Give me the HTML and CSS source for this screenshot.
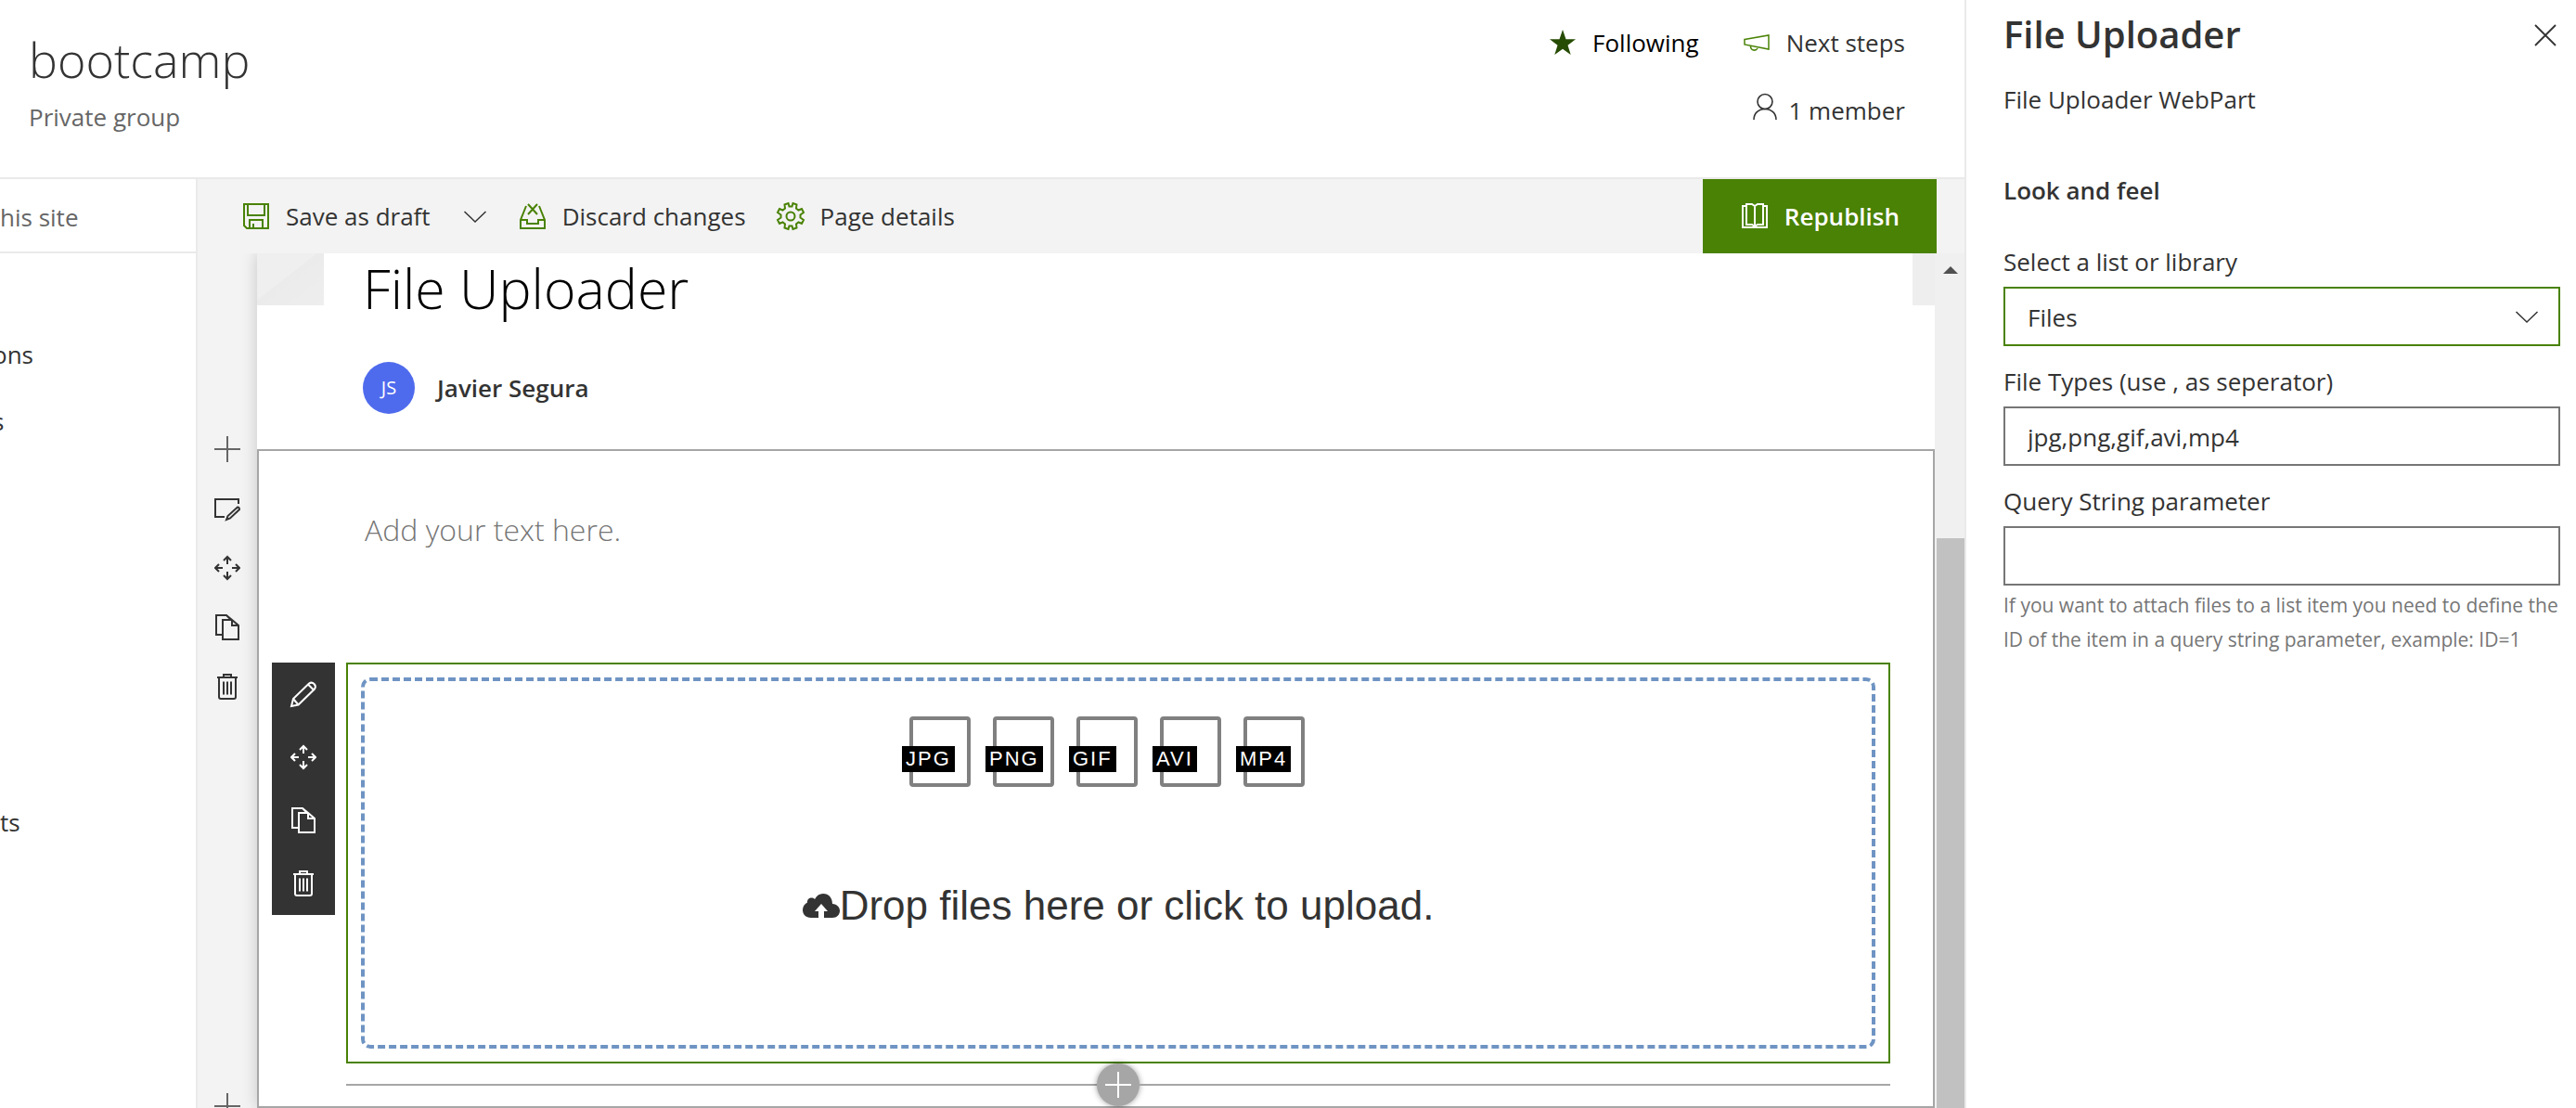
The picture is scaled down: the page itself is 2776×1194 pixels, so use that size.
FILE: index.html
```html
<!DOCTYPE html>
<html lang="en">
<head>
<meta charset="utf-8">
<title>bootcamp - File Uploader</title>
<link rel="stylesheet" href="styles.css">
</head>
<body>
<svg class="sprite" aria-hidden="true">
  <symbol id="move" viewBox="0 0 28 28"><path d="M14 2v8M10 6l4-4 4 4M14 26v-8M10 22l4 4 4-4M1 14h8M5 10l-4 4 4 4M27 14h-8M23 10l4 4-4 4"/></symbol>
  <symbol id="copy" viewBox="0 0 28 28"><path d="M9 22H2V1h11l4 4M9 6h10l7 6v15H9zM19 6v6h7M13 1l6 5"/></symbol>
  <symbol id="trash" viewBox="0 0 28 28"><path d="M3 4h22M10 4V1h8v3M5 4v21q0 2 2 2h14q2 0 2-2V4M10 8.500v14M14 8.500v14M18 8.500v14"/></symbol>
  <symbol id="plus" viewBox="0 0 28 28"><path d="M14 0v28M0 14h28"/></symbol>
  <symbol id="chevron" viewBox="0 0 28 28"><path stroke-width="1.5" d="M2.500 9 14 20 25.500 9"/></symbol>
</svg>
<div class="app">
  <div class="site">
    <header class="site-header">
      <div>
        <h1 class="site-name">bootcamp</h1>
        <p class="site-kind">Private group</p>
      </div>
      <div class="site-actions">
        <div class="action-row">
          <button class="cmd following" type="button">
            <svg class="icon" viewBox="0 0 28 28"><path fill="#264b03" stroke="none" d="M14 0l3.500 10.300H28l-8.500 6.500L22.700 27 14 20.800 5.300 27l3.200-10.200L0 10.300h10.500z"/></svg>
            <span>Following</span>
          </button>
          <button class="cmd" type="button">
            <svg class="icon green" viewBox="0 0 28 28"><path stroke-width="1.5" d="M1 10.500 27 6v15L1 16zM7.500 17.500v1a4 4 0 0 0 7.500 1.500"/></svg>
            <span>Next steps</span>
          </button>
        </div>
        <a class="cmd members" href="#members">
          <svg class="icon" viewBox="0 0 28 28"><g stroke-width="1.600"><circle cx="14" cy="8.500" r="8"/><path d="M2 28c0-7 5-11.500 12-11.500S26 21 26 28"/></g></svg>
          <span>1 member</span>
        </a>
      </div>
    </header>
    <div class="workspace">
      <nav class="side-nav" aria-label="Site">
        <a class="search-link" href="#search">his site</a>
        <ul class="nav-list">
          <li><a href="#1">ons</a></li>
          <li><a href="#2">s</a></li>
          <li class="nav-contents"><a href="#3">ts</a></li>
        </ul>
      </nav>
      <main class="editor">
        <div class="command-bar">
          <button class="cmd" type="button">
            <svg class="icon green" viewBox="0 0 28 28"><path d="M1 1h26v26H4l-3-3zM5 1v12h18V1M7 27v-9h14v9M11 27v-5"/></svg>
            <span>Save as draft</span>
          </button>
          <button class="cmd" type="button" aria-label="More save options"><svg class="icon" viewBox="0 0 28 28"><use href="#chevron"/></svg></button>
          <button class="cmd" type="button">
            <svg class="icon green" viewBox="0 0 28 28"><path d="M7 3 1 18v9h26v-9L21 3M1 18h7v4h12v-4h7M9 1l10 11M19 1 9 12"/></svg>
            <span>Discard changes</span>
          </button>
          <button class="cmd" type="button">
            <svg class="icon green" viewBox="0 0 28 28"><circle cx="14" cy="14" r="4.500"/><path d="M11.500 0l1 3.500h3L16.500 0l4 1.500-.5 4 2.500 2 3.500-1.500 2 4-3.500 2.500v3l3.500 2.500-2 4-3.500-1.500-2.500 2 .5 4-4 1.500-1-3.500h-3l-1 3.500-4-1.500.5-4-2.500-2L2 22l-2-4 3.500-2.500v-3L0 10l2-4 3.500 1.500 2.500-2-.5-4z"/></svg>
            <span>Page details</span>
          </button>
          <button class="cmd republish" type="button">
            <svg class="icon" viewBox="0 0 28 28"><path d="M5 3H1v23h26V3h-4M5 1h6l3 2 3-2h6v22h-6l-3 2-3-2H5zM14 3v22"/></svg>
            <span>Republish</span>
          </button>
        </div>
        <div class="canvas">
          <div class="section-rail">
            <button type="button" aria-label="Add section"><svg class="icon faint" viewBox="0 0 28 28"><use href="#plus"/></svg></button>
            <button type="button" aria-label="Edit section"><svg class="icon" viewBox="0 0 28 28"><path d="M11 23H1V4h25v5M13 26l1.500-4L25 12.500q2 0 2 2.500L17 24.500z"/></svg></button>
            <button type="button" aria-label="Move section"><svg class="icon" viewBox="0 0 28 28"><use href="#move"/></svg></button>
            <button type="button" aria-label="Duplicate section"><svg class="icon" viewBox="0 0 28 28"><use href="#copy"/></svg></button>
            <button type="button" aria-label="Delete section"><svg class="icon" viewBox="0 0 28 28"><use href="#trash"/></svg></button>
            <button class="rail-end" type="button" aria-label="Add section below"><svg class="icon faint" viewBox="0 0 28 28"><use href="#plus"/></svg></button>
          </div>
          <article class="page">
            <div class="page-top">
              <div class="banner-corner"></div>
              <div class="page-heading">
                <h2 class="page-title">File Uploader</h2>
                <div class="author"><span class="avatar">JS</span><span>Javier Segura</span></div>
              </div>
              <div class="banner-corner banner-end"></div>
            </div>
            <section class="section">
              <p class="placeholder">Add your text here.</p>
              <div class="webpart-row">
                <div class="webpart-tools">
                  <button type="button" aria-label="Edit web part"><svg class="icon" viewBox="0 0 28 28"><path d="M1 27l2-8L20 2.500q3-2 5.500.500t.500 5.500L8.500 25.500zM3 19l5.500 6.500M19 3.500l6 6"/></svg></button>
                  <button type="button" aria-label="Move web part"><svg class="icon" viewBox="0 0 28 28"><use href="#move"/></svg></button>
                  <button type="button" aria-label="Duplicate web part"><svg class="icon" viewBox="0 0 28 28"><use href="#copy"/></svg></button>
                  <button type="button" aria-label="Delete web part"><svg class="icon" viewBox="0 0 28 28"><use href="#trash"/></svg></button>
                </div>
                <div class="webpart">
                  <div class="dropzone">
                    <ul class="file-types">
                      <li class="file"><span>JPG</span></li>
                      <li class="file"><span>PNG</span></li>
                      <li class="file"><span>GIF</span></li>
                      <li class="file"><span>AVI</span></li>
                      <li class="file"><span>MP4</span></li>
                    </ul>
                    <button class="upload" type="button">
                      <svg class="cloud" viewBox="0 0 40 26"><path fill-rule="evenodd" d="M9 26C3 26 0 22 0 17.500 0 14 2 11 5 9.500 4.500 5 10 3 13 6 15 2 18 0 22 0c6 0 10 4.500 10 11 5 .5 8 3.500 8 7.500S37 26 32 26H23v-7h4l-7-8-7 8h4v7z"/></svg>
                      <span>Drop files here or click to upload.</span>
                    </button>
                  </div>
                </div>
              </div>
              <div class="add-row"><button class="add-part" type="button" aria-label="Add web part"><svg class="icon" viewBox="0 0 28 28"><use href="#plus"/></svg></button></div>
            </section>
          </article>
          <div class="scrollbar">
            <div class="scroll-space"><svg class="scroll-arrow" viewBox="0 0 16 8"><path d="M0 8 8 0l8 8z"/></svg></div>
            <div class="scroll-thumb"></div>
          </div>
        </div>
      </main>
    </div>
  </div>
  <aside class="pane">
    <div class="pane-head">
      <h2 class="pane-title">File Uploader</h2>
      <button class="close" type="button" aria-label="Close"><svg class="icon" viewBox="0 0 28 28"><path stroke-width="1.800" d="M3 4l22 22M25 4 3 26"/></svg></button>
    </div>
    <p class="pane-desc">File Uploader WebPart</p>
    <h3 class="pane-group">Look and feel</h3>
    <form class="fields">
      <div>
        <label for="library">Select a list or library</label>
        <div class="select-wrap">
          <select class="control active" id="library"><option>Files</option></select>
          <svg class="icon" viewBox="0 0 28 28"><use href="#chevron"/></svg>
        </div>
      </div>
      <div>
        <label for="types">File Types (use , as seperator)</label>
        <input class="control" id="types" type="text" value="jpg,png,gif,avi,mp4">
      </div>
      <div>
        <label for="query">Query String parameter</label>
        <input class="control" id="query" type="text" aria-describedby="query-help">
        <p class="help" id="query-help">If you want to attach files to a list item you need to define the ID of the item in a query string parameter, example: ID=1</p>
      </div>
    </form>
  </aside>
</div>
</body>
</html>
```
FILE: styles.css
```css
* { box-sizing: border-box; }

body, h1, h2, h3, p, ul { margin: 0; padding: 0; }

body {
  background: #fff;
  color: #333;
  font: 26px/36px "Open Sans", "Noto Sans", sans-serif;
}

ul { list-style: none; }
a { color: inherit; text-decoration: none; }
button, input, select { font: inherit; color: inherit; }
button { padding: 0; border: 0; background: none; cursor: pointer; }

.sprite { position: absolute; width: 0; height: 0; }

.icon {
  flex: none;
  width: 28px;
  height: 28px;
  overflow: visible;
  fill: none;
  stroke: currentColor;
  stroke-width: 2;
}
.green { color: #498205; }
.faint { color: #666; }

.app {
  display: grid;
  grid-template-columns: 1fr 659px;
  height: 100vh;
  overflow: hidden;
}
.site { display: flex; flex-direction: column; min-width: 0; min-height: 0; }

/* Site header */
.site-header {
  display: flex;
  justify-content: space-between;
  min-height: 193px;
  padding: 28px 64px 0 31px;
  border-bottom: 2px solid #eaeaea;
}
.site-name { font-size: 52px; font-weight: 300; line-height: 72px; }
.site-kind { margin-top: 8px; color: #666; }
.site-actions { display: flex; flex-direction: column; align-items: flex-end; gap: 37px; }
.action-row { display: flex; gap: 48px; }
.cmd { display: flex; align-items: center; gap: 18px; }
.following { color: #000; }
.members { align-items: flex-start; gap: 12px; }

/* Left navigation */
.workspace { display: flex; flex: 1; min-height: 0; }
.side-nav { flex: none; width: 213px; border-right: 2px solid #eaeaea; overflow: hidden; }
.search-link {
  display: block;
  padding: 23px 0 19px;
  border-bottom: 2px solid #eaeaea;
  color: #666;
}
.nav-list {
  display: grid;
  grid-auto-rows: 72px;
  padding-top: 91px;
  text-indent: -8px;
}
.nav-contents { grid-row: 8; text-indent: 0; }

/* Command bar */
.editor { display: flex; flex: 1; flex-direction: column; min-width: 0; background: #f3f3f3; }
.command-bar { display: flex; flex: none; gap: 34px; height: 80px; padding: 0 30px 0 49px; }
.republish {
  margin-left: auto;
  padding: 0 40px 0 42px;
  background: #498205;
  color: #fff;
  font-weight: 600;
}

/* Page canvas */
.canvas {
  display: grid;
  grid-template-columns: 64px 1fr 32px;
  flex: 1;
  min-height: 0;
  overflow: hidden;
}
.section-rail { display: flex; flex-direction: column; padding-top: 179px; }
.section-rail button {
  display: grid;
  flex: none;
  place-items: center;
  height: 64px;
}
.section-rail .rail-end { margin-top: auto; margin-bottom: -30px; }
.page { min-width: 0; background: #fff; box-shadow: 0 0 16px rgba(0, 0, 0, 0.18); }
.page-top { display: flex; align-items: flex-start; padding-bottom: 38px; }
.banner-corner {
  flex: none;
  width: 72px;
  height: 56px;
  background: linear-gradient(142deg, #efefef 45%, #ebebeb 45%, #eee);
}
.banner-end { width: 24px; background: #eee; }
.page-heading { flex: 1; padding-left: 42px; }
.page-title { color: #000; font-size: 59px; font-weight: 300; line-height: 74px; }
.author { display: flex; align-items: center; gap: 24px; margin-top: 43px; font-weight: 600; }
.avatar {
  width: 56px;
  border-radius: 50%;
  background: #4f6bed;
  color: #fff;
  font-size: 20px;
  font-weight: 400;
  line-height: 56px;
  text-align: center;
}

.section { padding: 61px 46px 0 14px; border: 2px solid #a6a6a6; }
.placeholder {
  padding-left: 100px;
  color: #767676;
  font-size: 32px;
  font-weight: 300;
  line-height: 48px;
}
.webpart-row { display: flex; align-items: flex-start; gap: 12px; margin-top: 119px; }
.webpart-tools { flex: none; width: 68px; background: #333; color: #fff; }
.webpart-tools button { display: grid; place-items: center; width: 100%; height: 68px; }
.webpart { flex: 1; padding: 14px; border: 2px solid #498205; }
.dropzone {
  display: flex;
  flex-direction: column;
  align-items: center;
  min-height: 400px;
  padding-top: 38px;
  border: 4px dashed #6f94c3;
  border-radius: 10px;
  font-family: "Liberation Sans", Arial, sans-serif;
}
.file-types { display: flex; }
.file {
  position: relative;
  width: 66px;
  height: 76px;
  margin-right: 24px;
  border: 4px solid #808080;
  border-radius: 4px;
}
.file span {
  position: absolute;
  top: 28px;
  left: -12px;
  padding: 0 4px;
  background: #000;
  color: #fff;
  font-size: 22px;
  letter-spacing: 2px;
  line-height: 28px;
}
.upload { display: flex; align-items: center; margin-top: 103px; font-size: 44px; line-height: 50px; }
.cloud { width: 40px; height: 26px; fill: #333; }

.add-row { display: flex; align-items: center; margin-left: 80px; }
.add-row::before, .add-row::after { flex: 1; height: 2px; background: #a6a6a6; content: ""; }
.add-part {
  display: grid;
  place-items: center;
  width: 46px;
  height: 46px;
  border-radius: 50%;
  background: #a6a6a6;
  box-shadow: 0 0 6px rgba(0, 0, 0, 0.4);
  color: #fff;
}

.scrollbar { display: grid; grid-template-rows: 1fr 2fr; background: #f0f0f0; z-index: 1; }
.scroll-space { display: flex; justify-content: center; align-items: flex-start; padding: 14px 0 0 2px; }
.scroll-arrow { width: 16px; height: 8px; fill: #505050; }
.scroll-thumb { margin-left: 2px; background: #c1c1c1; }

/* Property pane */
.pane { padding: 11px 17px 0 40px; border-left: 2px solid #eaeaea; background: #fff; z-index: 1; }
.pane-head { display: flex; justify-content: space-between; align-items: center; }
.pane-title { font-size: 40px; font-weight: 600; line-height: 52px; }
.close { display: grid; margin-right: 2px; }
.pane-desc { margin-top: 26px; }
.pane-group { margin-top: 62px; font-size: 26px; font-weight: 600; }
.fields { display: flex; flex-direction: column; gap: 20px; margin-top: 41px; }
.fields label { display: block; margin-bottom: 9px; }
.control {
  display: block;
  width: 100%;
  height: 64px;
  padding: 2px 24px 0;
  border: 2px solid #767676;
  border-radius: 0;
  outline: 0;
  background: #fff;
  appearance: none;
}
.active { border-color: #498205; }
.select-wrap { position: relative; }
.select-wrap .icon { position: absolute; top: 18px; right: 22px; pointer-events: none; }
.help { margin-top: 3px; color: #767676; font-size: 21px; line-height: 37px; }
```
